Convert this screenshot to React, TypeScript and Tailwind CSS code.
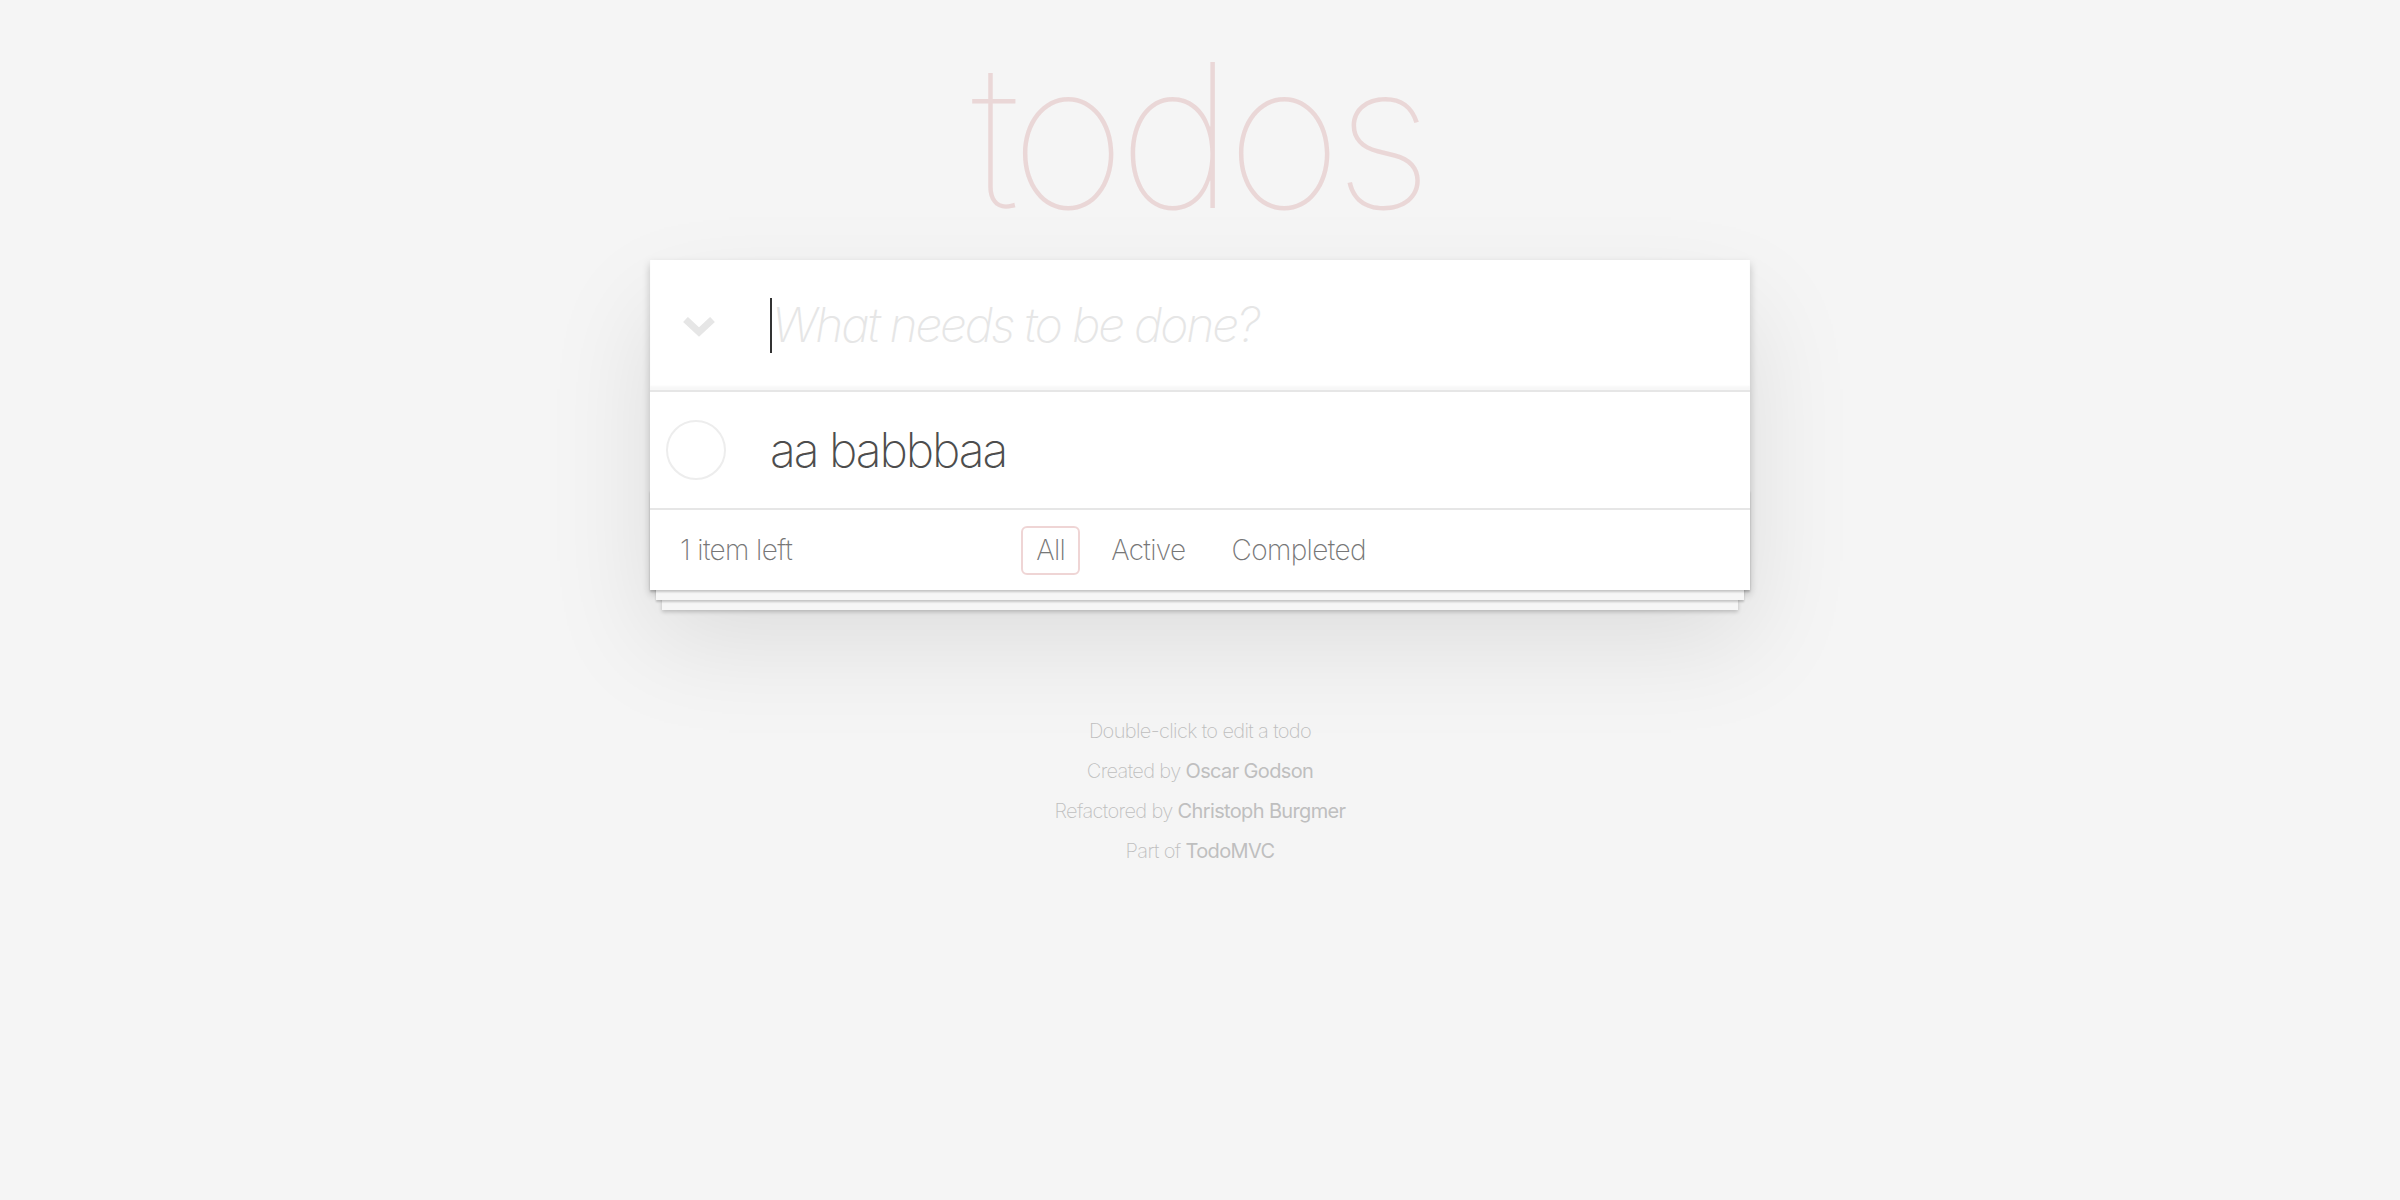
import { useState } from "react";

const filters = ["All", "Active", "Completed"];

function ChevronDown() {
  return (
    <svg width="32" height="20" viewBox="0 0 32 20" fill="none">
      <path d="M2.5 2.5 L16 15 L29.5 2.5" stroke="#e6e6e6" strokeWidth="7" />
    </svg>
  );
}

function Circle() {
  return (
    <svg width="60" height="60" viewBox="0 0 60 60">
      <circle cx="30" cy="30" r="29" fill="none" stroke="#ededed" strokeWidth="2" />
    </svg>
  );
}

export default function App() {
  const [selected] = useState("All");

  return (
    <div className="min-h-screen bg-[#f5f5f5] font-['Inter','Helvetica_Neue',Helvetica,Arial,sans-serif] font-extralight tracking-[-0.04em] text-[#4d4d4d]">
      <div className="mx-auto flex w-[1100px] flex-col">
        {/* Title */}
        <h1 className="h-[260px] pr-[4px] pt-[35px] text-center text-[200px] font-thin leading-[200px] tracking-[-8px] text-[rgba(175,47,47,0.15)]">
          todos
        </h1>

        {/* App card */}
        <section className="relative bg-white shadow-[0_4px_8px_0_rgba(0,0,0,0.2),0_50px_100px_0_rgba(0,0,0,0.1)]">
          {/* New todo input */}
          <header className="flex h-[130px] items-center shadow-[inset_0_-4px_2px_rgba(0,0,0,0.03)]">
            <div className="flex w-[120px] pl-[33px] pt-[4px]">
              <ChevronDown />
            </div>
            <div className="flex items-center">
              <span className="h-[55px] w-[2px] bg-[#333]" />
              <span className="text-[48px] italic leading-none tracking-[-0.046em] text-[#e6e6e6]">What needs to be done?</span>
            </div>
          </header>

          {/* Todo list */}
          <ul className="border-t-2 border-[#e6e6e6]">
            <li className="flex h-[116px] items-center">
              <div className="flex w-[120px] pl-[16px]">
                <Circle />
              </div>
              <span className="text-[48px] leading-none tracking-[-0.043em] text-[#4d4d4d]">aa babbbaa</span>
            </li>
          </ul>

          {/* Footer */}
          <footer className="relative flex h-[82px] items-center border-t-2 border-[#e6e6e6] px-[30px] text-[28px] text-[#777]">
            <div className="pointer-events-none absolute inset-x-0 bottom-0 h-[100px] overflow-hidden shadow-[0_2px_2px_rgba(0,0,0,0.2),0_16px_0_-6px_#f6f6f6,0_18px_2px_-6px_rgba(0,0,0,0.2),0_32px_0_-12px_#f6f6f6,0_34px_4px_-12px_rgba(0,0,0,0.2)]" />
            <span className="relative">1 item left</span>
            <ul className="absolute inset-x-0 flex justify-center gap-[16px] pl-[2px]">
              {filters.map((f) => (
                <li key={f}>
                  <span
                    className={
                      f === selected
                        ? "block rounded-[6px] border-2 border-[rgba(175,47,47,0.2)] px-[13px] py-[6px] leading-[33px]"
                        : "block rounded-[6px] border-2 border-transparent px-[13px] py-[6px] leading-[33px]"
                    }
                  >
                    {f}
                  </span>
                </li>
              ))}
            </ul>
          </footer>
        </section>

        {/* Info */}
        <footer className="mt-[131px] flex flex-col items-center gap-[20px] text-[20px] leading-[20px] text-[#bfbfbf]">
          <p>Double-click to edit a todo</p>
          <p>
            Created by <span className="font-normal">Oscar Godson</span>
          </p>
          <p>
            Refactored by <span className="font-normal">Christoph Burgmer</span>
          </p>
          <p>
            Part of <span className="font-normal">TodoMVC</span>
          </p>
        </footer>
      </div>
    </div>
  );
}
